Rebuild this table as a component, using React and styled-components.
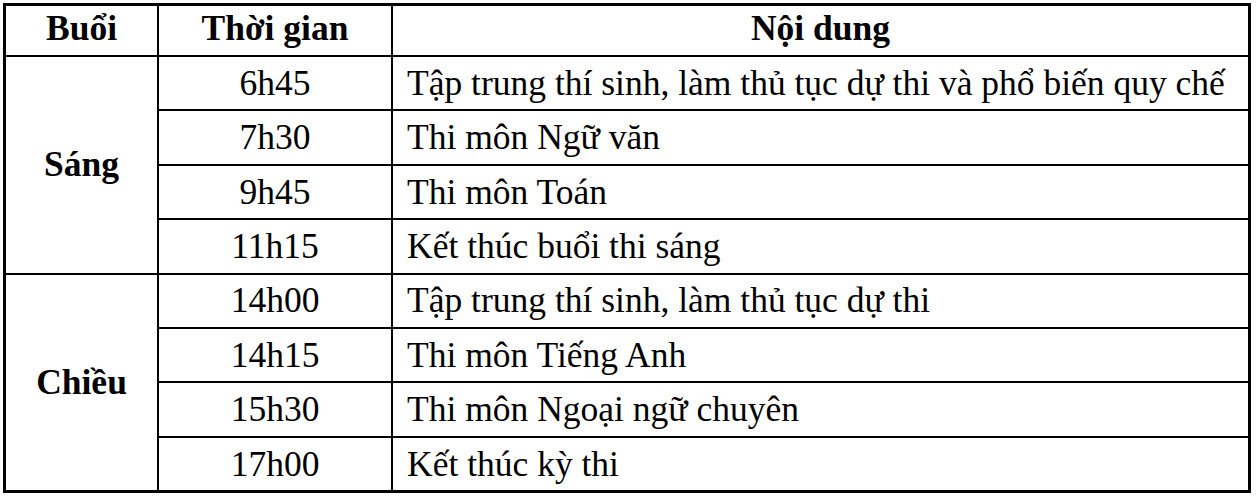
import styled, { createGlobalStyle } from "styled-components";

const GlobalStyle = createGlobalStyle`
  html, body {
    margin: 0;
    padding: 0;
    background: #ffffff;
  }
  body {
    font-family: "Liberation Serif", "Times New Roman", serif;
    color: #000000;
  }
`;

const Page = styled.div`
  padding: 3px;
`;

const Table = styled.table`
  border-collapse: separate;
  border-spacing: 0;
  table-layout: fixed;
  width: 1248px;
  border: 3px solid #000;
  border-bottom-width: 1px;
  font-family: "Liberation Serif", "Times New Roman", serif;
  font-size: 35.5px;
  color: #000;
`;

const HeadRow = styled.tr`
  height: 51px;
`;

const Row = styled.tr`
  height: 54.4px;
`;

const Cell = styled.td`
  box-sizing: border-box;
  padding: 0 ${(p) => (p.$left ? "14px" : "4px")};
  border-bottom: 2px solid #000;
  border-right: ${(p) => (p.$last ? "none" : "2px solid #000")};
  text-align: ${(p) => (p.$left ? "left" : "center")};
  font-weight: ${(p) => (p.$bold ? "bold" : "normal")};
  vertical-align: middle;
  white-space: nowrap;
  line-height: 1.15;
`;

const HeadCell = styled(Cell).attrs({ as: "th" })`
  font-weight: bold;
  padding-bottom: 4px;
`;

const schedule = [
  {
    session: "Sáng",
    items: [
      ["6h45", "Tập trung thí sinh, làm thủ tục dự thi và phổ biến quy chế"],
      ["7h30", "Thi môn Ngữ văn"],
      ["9h45", "Thi môn Toán"],
      ["11h15", "Kết thúc buổi thi sáng"],
    ],
  },
  {
    session: "Chiều",
    items: [
      ["14h00", "Tập trung thí sinh, làm thủ tục dự thi"],
      ["14h15", "Thi môn Tiếng Anh"],
      ["15h30", "Thi môn Ngoại ngữ chuyên"],
      ["17h00", "Kết thúc kỳ thi"],
    ],
  },
];

export default function App() {
  return (
    <Page>
      <GlobalStyle />
      <Table>
        <colgroup>
          <col style={{ width: 153 }} />
          <col style={{ width: 234 }} />
          <col />
        </colgroup>
        <thead>
          <HeadRow>
            <HeadCell>Buổi</HeadCell>
            <HeadCell>Thời gian</HeadCell>
            <HeadCell $last>Nội dung</HeadCell>
          </HeadRow>
        </thead>
        <tbody>
          {schedule.map((block) =>
            block.items.map(([time, text], i) => (
              <Row key={block.session + time}>
                {i === 0 && (
                  <Cell rowSpan={block.items.length} $bold>
                    {block.session}
                  </Cell>
                )}
                <Cell>{time}</Cell>
                <Cell $left $last>
                  {text}
                </Cell>
              </Row>
            ))
          )}
        </tbody>
      </Table>
    </Page>
  );
}
